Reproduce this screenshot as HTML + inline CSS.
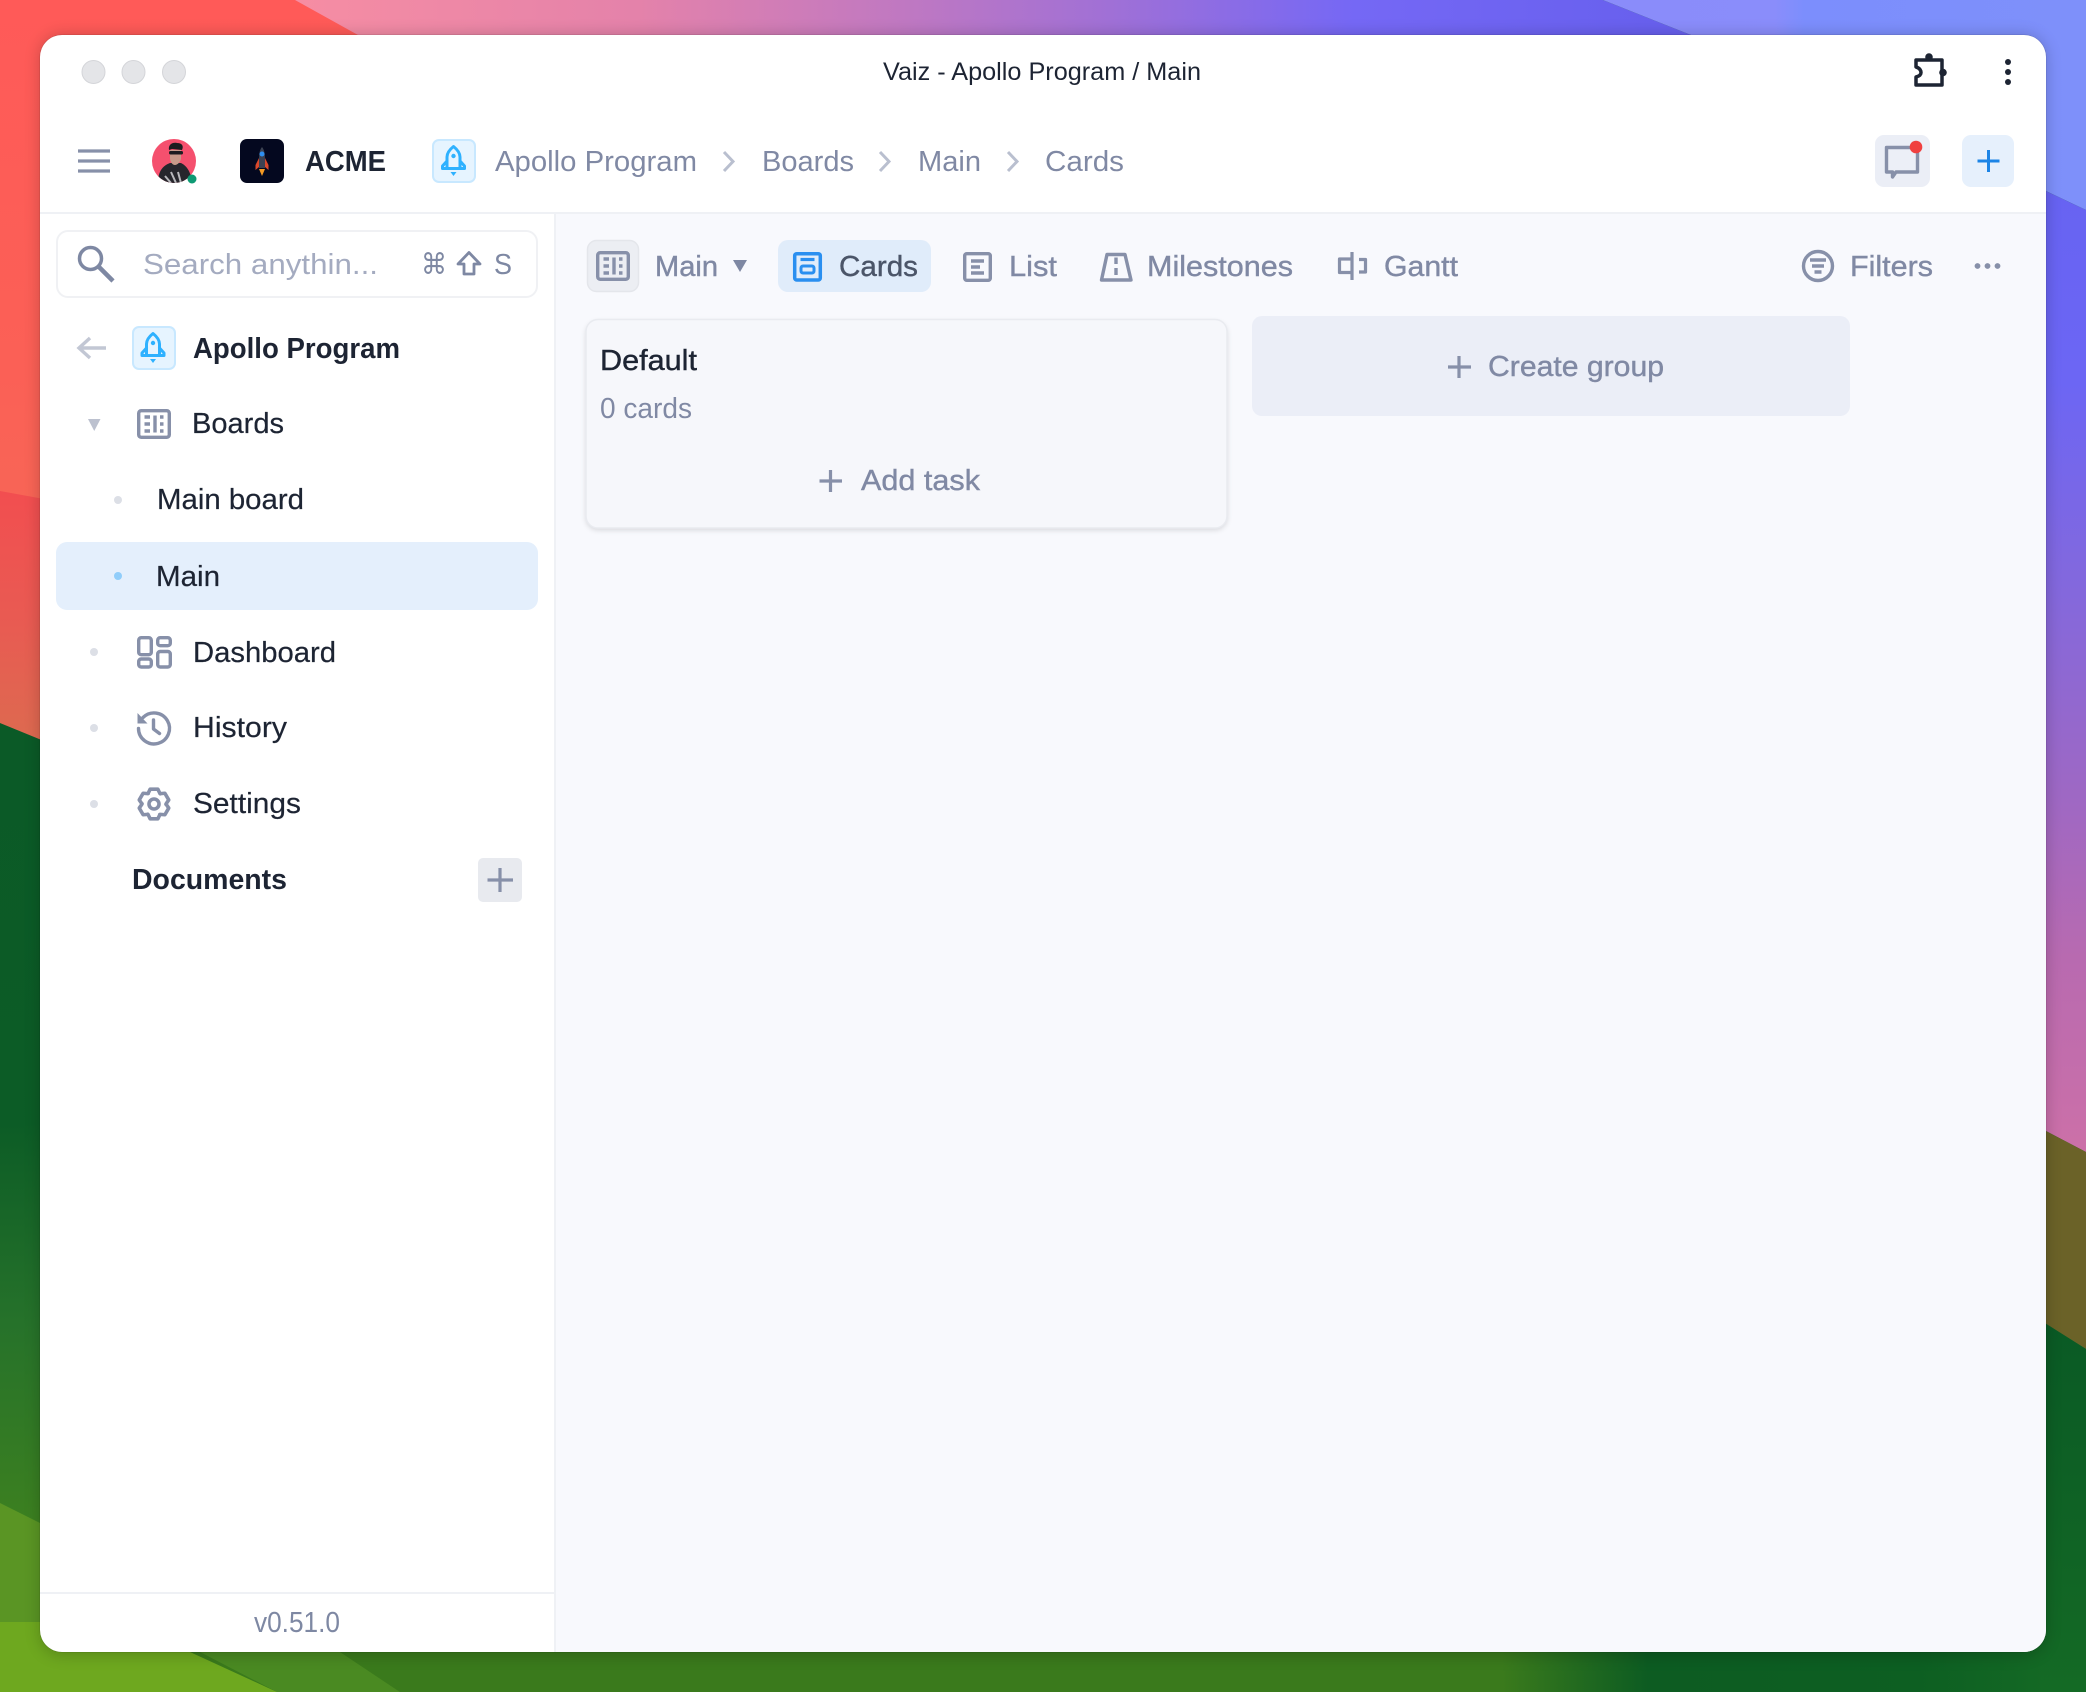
<!DOCTYPE html>
<html lang="en">
<head>
<meta charset="utf-8">
<title>Vaiz - Apollo Program / Main</title>
<style>
html,body{margin:0;padding:0;width:2086px;height:1692px;overflow:hidden;background:#1a6a25}
svg{display:block}
text{font-family:"Liberation Sans",sans-serif;font-size:28.8px;fill:#1d2433}
.g{fill:#8089a4}
.gm{fill:#8089a4;stroke:#8089a4;stroke-width:.4px}
.d{fill:#1d2433;stroke:#1d2433;stroke-width:.2px}
.b{font-weight:700}
.ic{fill:none;stroke:#8790a9;stroke-width:3.4;stroke-linecap:round;stroke-linejoin:round}
</style>
</head>
<body>
<svg xmlns="http://www.w3.org/2000/svg" width="2086" height="1692" viewBox="0 0 2086 1692">
<defs>
<linearGradient id="gRed" x1="0" y1="0" x2="0" y2="1"><stop offset="0" stop-color="#ff5a58"/><stop offset=".5" stop-color="#fb6056"/><stop offset="1" stop-color="#f26e55"/></linearGradient>
<linearGradient id="gRed2" x1="0" y1="0" x2="0" y2="1"><stop offset="0" stop-color="#f24e50"/><stop offset=".5" stop-color="#e95a52"/><stop offset="1" stop-color="#dd6a50"/></linearGradient>
<linearGradient id="gTop" gradientUnits="userSpaceOnUse" x1="300" y1="0" x2="1650" y2="0"><stop offset="0" stop-color="#f68da3"/><stop offset=".25" stop-color="#e482aa"/><stop offset=".45" stop-color="#bf78c2"/><stop offset=".6" stop-color="#a070d6"/><stop offset=".78" stop-color="#7568f5"/><stop offset="1" stop-color="#6860ee"/></linearGradient>
<linearGradient id="gTopR" gradientUnits="userSpaceOnUse" x1="1600" y1="0" x2="2086" y2="0"><stop offset="0" stop-color="#8a8cfa"/><stop offset=".36" stop-color="#8a8dfb"/><stop offset=".42" stop-color="#7c8efd"/><stop offset="1" stop-color="#7e90fa"/></linearGradient>
<linearGradient id="gRight" gradientUnits="userSpaceOnUse" x1="0" y1="190" x2="0" y2="1150"><stop offset="0" stop-color="#6763f2"/><stop offset=".2" stop-color="#6c66f4"/><stop offset=".42" stop-color="#8468dc"/><stop offset=".63" stop-color="#9e68c4"/><stop offset=".8" stop-color="#b86ab0"/><stop offset="1" stop-color="#cc70a8"/></linearGradient>
<linearGradient id="gGreenL" gradientUnits="userSpaceOnUse" x1="0" y1="723" x2="0" y2="1523"><stop offset="0" stop-color="#0b5a27"/><stop offset=".5" stop-color="#0c5c26"/><stop offset=".75" stop-color="#26722a"/><stop offset="1" stop-color="#3c8020"/></linearGradient>
<linearGradient id="gGreenR" gradientUnits="userSpaceOnUse" x1="0" y1="1323" x2="0" y2="1692"><stop offset="0" stop-color="#0a5a25"/><stop offset="1" stop-color="#146a25"/></linearGradient>
<linearGradient id="gBottom" gradientUnits="userSpaceOnUse" x1="0" y1="0" x2="2086" y2="0"><stop offset="0" stop-color="#3a7a1c"/><stop offset=".72" stop-color="#3a7a1c"/><stop offset=".79" stop-color="#0d5c22"/><stop offset=".92" stop-color="#0d5f22"/><stop offset="1" stop-color="#166c25"/></linearGradient>
<filter id="sh" x="-5%" y="-5%" width="110%" height="110%"><feGaussianBlur stdDeviation="8"/></filter>
<filter id="csh" x="-5%" y="-10%" width="110%" height="125%"><feGaussianBlur stdDeviation="3"/></filter>
<clipPath id="win"><rect x="40" y="35" width="2006" height="1617" rx="22"/></clipPath>
<clipPath id="av"><circle cx="174" cy="161" r="22"/></clipPath>
<g id="rocket" fill="none" stroke="#2eb1ff" stroke-width="3" stroke-linejoin="round" stroke-linecap="round">
<path d="M-6.500,6V-4C-6.500,-9 -2.500,-12.500 0,-14.500C2.500,-12.500 6.500,-9 6.500,-4V6"/>
<path d="M-6.500,0L-11,5V7.500H11V5L6.500,0"/>
<circle cx="0" cy="-5" r="2.200" fill="#2eb1ff" stroke="none"/>
<path d="M-3,11H3L0,15Z" fill="#2eb1ff" stroke="none"/>
</g>
<g id="board" class="ic">
<rect x="1.700" y="1.700" width="30.600" height="26.600" rx="2.500"/>
<path d="M7.500,8H13M7.500,15H13M7.500,22H13M18,6.500V23.500M23,8H26.500M23,15H26.500M23,22H26.500" stroke-linecap="butt"/>
</g>
<path id="tooth" d="M-5.870,-10.600L-3.870,-14.800H3.870L5.870,-10.600L6.230,-10.300"/>
</defs>

<!-- wallpaper -->
<rect width="2086" height="1692" fill="url(#gBottom)"/>
<rect x="0" y="0" width="420" height="740" fill="url(#gRed)"/>
<polygon points="295,0 1603,0 1691,35 1691,60 358,60 358,35" fill="url(#gTop)"/>
<polygon points="1603,0 2086,0 2086,210 2046,191 1691,35" fill="url(#gTopR)"/>
<polygon points="2046,191 2086,210 2086,1152 2046,1131" fill="url(#gRight)"/>
<polygon points="2040,1128 2086,1152 2086,1349 2040,1320" fill="#6b6228"/>
<polygon points="2040,1320 2086,1349 2086,1692 2040,1692" fill="url(#gGreenR)"/>
<polygon points="0,491 44,499 44,741 0,723" fill="url(#gRed2)"/>
<polygon points="0,723 44,741 44,1700 0,1700" fill="url(#gGreenL)"/>
<polygon points="0,1503 44,1525 44,1700 0,1700" fill="#5a9524"/>
<polygon points="200,1652 340,1652 400,1692 277,1692" fill="#4a8a22"/>
<polygon points="0,1622 120,1622 190,1652 277,1692 0,1692" fill="#6ea81f"/>
<rect x="40" y="35" width="2006" height="1620" rx="22" fill="#000" opacity=".2" filter="url(#sh)"/>
<rect x="39.500" y="34.500" width="2007" height="1618" rx="22.500" fill="#000" opacity=".14"/>

<!-- window -->
<g clip-path="url(#win)">
<rect x="40" y="35" width="2006" height="1617" fill="#fff"/>
<rect x="556" y="214" width="1490" height="1438" fill="#f8f9fd"/>
<rect x="554" y="214" width="2" height="1438" fill="#eff1f5"/>
<rect x="40" y="212" width="2006" height="2" fill="#eff1f5"/>
<rect x="40" y="1592" width="514" height="2" fill="#eff1f5"/>
</g>

<!-- traffic lights -->
<circle cx="93.500" cy="72" r="11.500" fill="#e4e5e8" stroke="#d4d5d9" stroke-width="1"/>
<circle cx="133.500" cy="72" r="11.500" fill="#e4e5e8" stroke="#d4d5d9" stroke-width="1"/>
<circle cx="174" cy="72" r="11.500" fill="#e4e5e8" stroke="#d4d5d9" stroke-width="1"/>

<text x="883" y="80" style="font-size:25px" textLength="318" lengthAdjust="spacingAndGlyphs">Vaiz - Apollo Program / Main</text>

<!-- puzzle + kebab -->
<g fill="none" stroke="#1d2433" stroke-width="3.500" stroke-linejoin="round">
<path d="M1916,60H1942V85H1916V77C1920,76 1921,74 1921,72.500C1921,71 1920,68 1916,67Z"/>
</g>
<circle cx="1929" cy="57" r="3.800" fill="#1d2433"/>
<circle cx="1943" cy="72.500" r="3.800" fill="#1d2433"/>
<circle cx="2008" cy="62" r="3" fill="#1d2433"/>
<circle cx="2008" cy="72" r="3" fill="#1d2433"/>
<circle cx="2008" cy="82" r="3" fill="#1d2433"/>

<!-- header row -->
<path d="M78,151H110M78,161H110M78,171H110" stroke="#8790a9" stroke-width="3.200" fill="none"/>
<g clip-path="url(#av)">
<rect x="150" y="137" width="48" height="48" fill="#f5506e"/>
<path d="M158,183C158,172 162,166 170,163L181,163C187,166 191,172 192,183Z" fill="#26262c"/>
<path d="M165,176L171,183M171,172L176,183M178,172L181,183" stroke="#b8b8bc" stroke-width="2" fill="none"/>
<path d="M170,150H181V158C181,162 177,165 175,165C172,165 170,161 170,158Z" fill="#c79a8a"/>
<path d="M169,150C168,145 172,142 177,143C182,143 184,146 182,150L172,149Z" fill="#1c1c20"/>
<rect x="169" y="151" width="14" height="3.500" rx="1.500" fill="#1c1c20"/>
</g>
<circle cx="192" cy="179" r="4.500" fill="#0e9a74"/>

<rect x="240" y="139" width="44" height="44" rx="7" fill="#04081f"/>
<path d="M262,147C259.500,150 259,154 259,160V168H265V160C265,154 264.500,150 262,147Z" fill="#3c4252"/>
<circle cx="262" cy="154" r="2.500" fill="#2e8ff0"/>
<path d="M259,158L255.500,165V170L259,167ZM265,158L268.500,165V170L265,167Z" fill="#d9482b"/>
<path d="M259,169H265L262,176Z" fill="#f59a23"/>

<text class="b" x="305" y="171" textLength="81" lengthAdjust="spacingAndGlyphs">ACME</text>

<rect x="433" y="140" width="42" height="42" rx="6" fill="#e6f4ff" stroke="#c8e8ff" stroke-width="2"/>
<use href="#rocket" x="453.500" y="161"/>

<text class="g" x="495" y="171" textLength="202" lengthAdjust="spacingAndGlyphs">Apollo Program</text>
<path d="M724,152L733,161.500L724,171" fill="none" stroke="#b9bfcf" stroke-width="3"/>
<text class="g" x="762" y="171" textLength="92" lengthAdjust="spacingAndGlyphs">Boards</text>
<path d="M880,152L889,161.500L880,171" fill="none" stroke="#b9bfcf" stroke-width="3"/>
<text class="g" x="918" y="171" textLength="63" lengthAdjust="spacingAndGlyphs">Main</text>
<path d="M1008,152L1017,161.500L1008,171" fill="none" stroke="#b9bfcf" stroke-width="3"/>
<text class="g" x="1045" y="171" textLength="79" lengthAdjust="spacingAndGlyphs">Cards</text>

<rect x="1875" y="135" width="55" height="52" rx="9" fill="#ebeef6"/>
<path d="M1886.500,147.500H1917.500V172H1896L1892.500,177V172H1886.500Z" fill="#eceff7" stroke="#8790a9" stroke-width="3.400" stroke-linejoin="round"/>
<circle cx="1916" cy="147" r="6.300" fill="#f04040"/>
<rect x="1962" y="135" width="52" height="52" rx="9" fill="#e6f0fc"/>
<path d="M1988.500,150V172M1977.500,161H1999.500" stroke="#1c84e6" stroke-width="3" fill="none"/>

<!-- search -->
<rect x="57" y="231" width="480" height="66" rx="11" fill="#fff" stroke="#f0f1f4" stroke-width="2"/>
<circle cx="90.500" cy="258.500" r="11" fill="none" stroke="#7e88a3" stroke-width="3.500"/>
<path d="M99,267L113,281" stroke="#7e88a3" stroke-width="4.500" fill="none"/>
<text x="143" y="274" style="fill:#a4abc0" textLength="235" lengthAdjust="spacingAndGlyphs">Search anythin...</text>
<text x="421" y="274" style="fill:#7e88a3;font-family:'DejaVu Sans',sans-serif;font-size:29px" textLength="26" lengthAdjust="spacingAndGlyphs">⌘</text>
<path d="M469,252.500L480,264H474V274H464V264H458Z" fill="none" stroke="#7e88a3" stroke-width="2.800" stroke-linejoin="round"/>
<text x="494" y="274" style="fill:#7e88a3" textLength="18" lengthAdjust="spacingAndGlyphs">S</text>

<!-- sidebar -->
<path d="M106,348H80M90,338L79,348L90,358" fill="none" stroke="#c2c7d4" stroke-width="3.400"/>
<rect x="133" y="327" width="42" height="42" rx="6" fill="#e6f4ff" stroke="#c8e8ff" stroke-width="2"/>
<use href="#rocket" x="153" y="348"/>
<text class="b" x="193" y="358" textLength="207" lengthAdjust="spacingAndGlyphs">Apollo Program</text>

<path d="M88,419H100.500L94.250,431Z" fill="#bcc1cf"/>
<use href="#board" x="137" y="409"/>
<text class="d" x="192" y="433" textLength="92" lengthAdjust="spacingAndGlyphs">Boards</text>

<circle cx="118" cy="500" r="4" fill="#dcdfe6"/>
<text class="d" x="157" y="509" textLength="147" lengthAdjust="spacingAndGlyphs">Main board</text>

<rect x="56" y="542" width="482" height="68" rx="11" fill="#e4effc"/>
<circle cx="118" cy="576" r="4" fill="#90cdfa"/>
<text class="d" x="156" y="586" textLength="64" lengthAdjust="spacingAndGlyphs">Main</text>

<circle cx="94" cy="652" r="4" fill="#dcdfe6"/>
<g class="ic">
<rect x="138.700" y="637.700" width="12.600" height="17" rx="2.500"/>
<rect x="157.700" y="637.700" width="12.600" height="8" rx="2.500"/>
<rect x="138.700" y="659" width="12.600" height="8" rx="2.500"/>
<rect x="157.700" y="651.500" width="12.600" height="15.500" rx="2.500"/>
</g>
<text class="d" x="193" y="662" textLength="143" lengthAdjust="spacingAndGlyphs">Dashboard</text>

<circle cx="94" cy="728" r="4" fill="#dcdfe6"/>
<g class="ic">
<path d="M143,717.500A15.500,15.500 0 1 1 138.500,728.500"/>
<path d="M153.500,720V729L159.500,733.500"/>
</g>
<path d="M137.500,713V723.500H147.500Z" fill="#8790a9"/>
<text class="d" x="193" y="737" textLength="94" lengthAdjust="spacingAndGlyphs">History</text>

<circle cx="94" cy="804" r="4" fill="#dcdfe6"/>
<g class="ic" transform="translate(154 804)" style="stroke-width:3.600">
<use href="#tooth"/>
<use href="#tooth" transform="rotate(60)"/>
<use href="#tooth" transform="rotate(120)"/>
<use href="#tooth" transform="rotate(180)"/>
<use href="#tooth" transform="rotate(240)"/>
<use href="#tooth" transform="rotate(300)"/>
<circle r="5"/>
</g>
<text class="d" x="193" y="813" textLength="108" lengthAdjust="spacingAndGlyphs">Settings</text>

<text class="b" x="132" y="889" textLength="155" lengthAdjust="spacingAndGlyphs">Documents</text>
<rect x="478" y="858" width="44" height="44" rx="5" fill="#e8eaef"/>
<path d="M500,868V892M487.500,880H513" stroke="#8790a9" stroke-width="3.200" fill="none"/>

<text class="g" x="254" y="1632" textLength="86" lengthAdjust="spacingAndGlyphs" style="fill:#7e88a3">v0.51.0</text>

<!-- toolbar -->
<rect x="587.500" y="240.500" width="51" height="51" rx="9" fill="#eceef3" stroke="#e4e6eb" stroke-width="1.500"/>
<use href="#board" transform="translate(596 251)"/>
<text class="gm" x="655" y="276" textLength="63" lengthAdjust="spacingAndGlyphs">Main</text>
<path d="M733,260H747L740,272Z" fill="#7e88a3"/>

<rect x="778" y="240" width="153" height="52" rx="10" fill="#e0ecfa"/>
<g fill="none" stroke="#2a8ff0">
<rect x="794.700" y="253.700" width="25.600" height="26.300" rx="2" stroke-width="3.500"/>
<path d="M800.500,259.500H814.500" stroke-width="3.200"/>
<rect x="801" y="266" width="13" height="7" rx="2" stroke-width="3"/>
</g>
<text x="839" y="276" textLength="79" lengthAdjust="spacingAndGlyphs" style="fill:#4b5568;stroke:#4b5568;stroke-width:.4px">Cards</text>

<g class="ic">
<rect x="964.700" y="253.700" width="25.600" height="26.600" rx="2"/>
<path d="M971,261H984M971,267H980M971,273H984" stroke-linecap="butt"/>
</g>
<text class="gm" x="1009" y="276" textLength="48" lengthAdjust="spacingAndGlyphs">List</text>

<g class="ic">
<path d="M1107,254.500H1125L1131,280H1101.500Z"/>
<path d="M1116,257.500V264M1116,268V275" stroke-linecap="butt"/>
</g>
<text class="gm" x="1147" y="276" textLength="146" lengthAdjust="spacingAndGlyphs">Milestones</text>

<g fill="none" stroke="#8790a9" stroke-width="3.200" stroke-linejoin="round">
<path d="M1352,252V280"/>
<path d="M1352,259H1339.500V272.500H1352"/>
<path d="M1359,259.500H1365.500V272H1359"/>
</g>
<text class="gm" x="1384" y="276" textLength="74" lengthAdjust="spacingAndGlyphs">Gantt</text>

<g class="ic">
<circle cx="1818" cy="266" r="14.500"/>
<path d="M1810,260H1826M1812,266H1824M1814.500,272H1821.500" stroke-linecap="butt"/>
</g>
<text class="gm" x="1850" y="276" textLength="83" lengthAdjust="spacingAndGlyphs">Filters</text>
<circle cx="1977.500" cy="266" r="2.900" fill="#8790a9"/>
<circle cx="1987.500" cy="266" r="2.900" fill="#8790a9"/>
<circle cx="1997.500" cy="266" r="2.900" fill="#8790a9"/>

<!-- card -->
<rect x="586" y="322" width="641" height="208" rx="12" fill="#000" opacity=".14" filter="url(#csh)"/>
<rect x="586" y="319.500" width="641" height="208.500" rx="12" fill="#f6f7fb" stroke="#e9ebf0" stroke-width="1.500"/>
<text class="d" x="600" y="370" textLength="97" lengthAdjust="spacingAndGlyphs" style="stroke-width:.4px">Default</text>
<text class="g" x="600" y="418" textLength="92" lengthAdjust="spacingAndGlyphs">0 cards</text>
<path d="M830.500,470V492M819.500,481H842" stroke="#8790a9" stroke-width="3.200" fill="none"/>
<text class="gm" x="861" y="490" textLength="119" lengthAdjust="spacingAndGlyphs">Add task</text>

<!-- create group -->
<rect x="1252" y="316" width="598" height="100" rx="10" fill="#ebeef7"/>
<path d="M1459,356V378M1448,367H1471" stroke="#8790a9" stroke-width="3.200" fill="none"/>
<text class="gm" x="1488" y="376" textLength="176" lengthAdjust="spacingAndGlyphs">Create group</text>
</svg>
</body>
</html>
